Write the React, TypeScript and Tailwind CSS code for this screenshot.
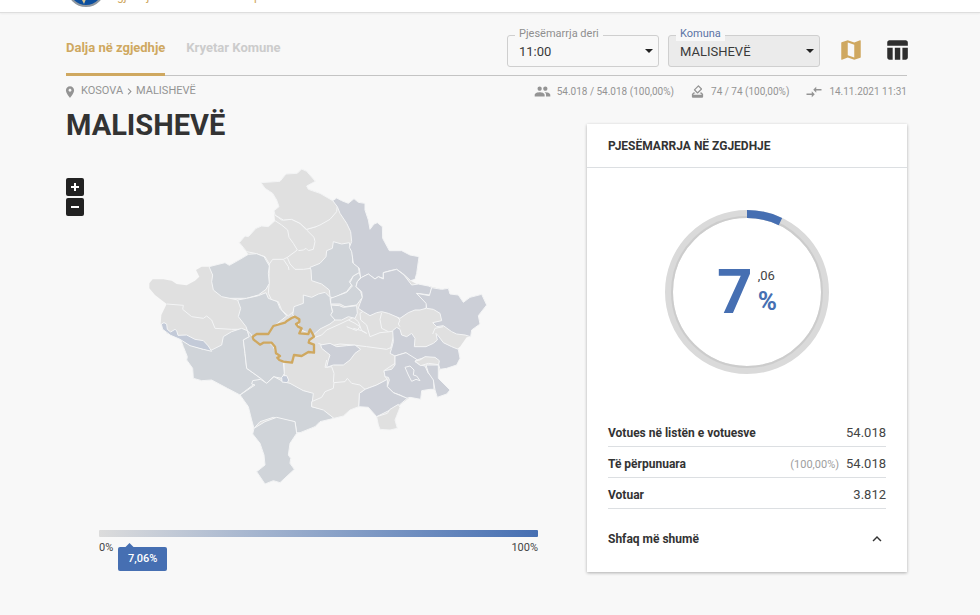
import type { ReactNode } from "react";

const LIGHT = "#e0e0e0";
const MID = "#d0d4d9";
const BLUE = "#cccfd7";
const LAKE = "#c3cad8";

type Region = { name: string; fill: string; points: string };

const outline =
  "363,68 420,64 438,42 472,40 485,27 500,34 526,64 500,78 505,88 540,100 578,122 590,114 605,122 625,130 642,116 655,127 675,130 675,150 685,180 690,208 702,192 712,188 727,200 728,235 748,272 785,272 810,285 837,290 830,340 812,362 835,375 865,378 905,388 925,385 930,402 955,405 970,427 990,412 1025,403 1040,435 1015,467 1020,492 995,510 992,530 980,532 960,560 950,568 960,595 950,615 920,625 898,628 895,655 930,690 920,702 892,712 885,690 870,688 845,692 842,718 810,712 780,735 778,745 765,780 772,805 750,810 720,808 710,770 685,742 655,740 630,750 610,768 582,775 540,785 525,800 480,818 470,820 450,850 445,885 452,895 450,910 463,928 420,968 400,962 375,972 350,935 375,915 372,885 360,850 338,822 342,805 325,740 300,705 262,685 215,660 185,662 160,655 158,625 140,600 142,590 130,560 120,535 80,520 62,492 64,465 80,432 45,405 28,385 28,370 38,358 70,358 95,362 110,372 140,376 165,362 178,350 168,330 185,320 207,320 255,308 268,316 300,298 325,283 298,248 315,228 325,230 348,205 365,198 385,200 405,182 402,152 417,140 410,120 398,100 375,85";

const northWest: Region[] = [
  { name: "Leposaviq", fill: LIGHT, points: "363,68 420,64 438,42 472,40 485,27 500,34 526,64 500,78 505,88 540,100 578,122 592,135 590,155 570,178 540,195 528,200 500,208 480,190 455,178 430,180 405,165 402,152 417,140 410,120 398,100 375,85" },
  { name: "Zubin Potok", fill: LIGHT, points: "405,182 425,195 443,210 447,232 460,250 472,270 442,292 430,298 398,298 388,312 375,290 345,280 320,275 298,248 315,228 325,230 348,205 365,198 385,200" },
  { name: "Istog", fill: MID, points: "207,320 255,308 268,316 300,298 325,283 350,281 372,290 388,318 385,340 388,370 378,388 355,405 320,415 270,415 245,410 220,390 215,365 218,345" },
  { name: "Klina", fill: MID, points: "293,420 320,415 355,407 378,398 385,415 412,425 420,445 440,468 400,500 385,520 340,532 325,520 318,500 295,470 302,445" },
];

const northEast: Region[] = [
  { name: "Vushtrri", fill: MID, points: "100,245 125,252 148,248 150,262 157,275 158,308 175,320 178,338 160,348 148,365 155,375 140,395 118,405 100,415 90,410 88,390 65,372 35,362 33,330 30,322 60,310 78,290 80,272 97,265" },
  { name: "Obiliq", fill: MID, points: "178,338 160,348 150,368 157,378 140,397 92,415 92,432 120,432 135,440 170,435 187,412 182,395 168,380 172,365 182,352" },
  { name: "Fushe Kosova", fill: MID, points: "92,435 118,437 130,442 170,437 172,460 165,475 145,470 125,480 105,480 90,465 98,455" },
  { name: "Podujeva", fill: BLUE, points: "98,122 110,114 125,122 145,130 162,116 175,127 195,130 195,150 205,180 210,208 222,192 232,188 247,200 248,235 268,272 305,272 330,285 357,290 350,340 345,358 332,362 310,342 290,328 270,332 250,338 250,355 235,350 225,357 205,342 182,354 178,325 160,310 155,275 148,262 155,245 152,215 140,190 120,160 112,140" },
  { name: "Prishtina", fill: BLUE, points: "185,352 205,342 225,357 235,350 250,357 250,338 290,328 312,345 335,375 355,372 385,378 395,382 390,405 350,400 380,430 378,445 360,450 345,450 325,458 300,475 265,460 245,455 230,458 210,467 190,455 175,445 180,430 187,412 185,395 168,380 172,365" },
  { name: "Kamenica", fill: BLUE, points: "350,400 388,407 395,383 425,388 445,385 450,402 475,405 490,427 510,412 545,403 560,435 535,467 540,492 515,510 512,530 495,525 470,522 455,515 430,497 410,500 398,488 425,482 420,460 400,448 380,445 378,430" },
  { name: "Drenas", fill: MID, points: "-18,440 10,430 10,405 35,412 55,402 75,397 90,412 92,430 97,455 92,465 105,480 90,492 60,507 40,525 15,515 -5,505 -5,478 -22,465" },
];

const southWest: Region[] = [
  { name: "Gjakova", fill: MID, points: "122,88 150,105 190,118 215,120 245,105 250,80 275,65 305,55 322,62 328,80 310,90 315,130 320,175 362,205 335,228 300,255 262,235 215,210 185,212 160,205 158,175 140,150 142,140 130,110" },
  { name: "Rahovec", fill: MID, points: "322,62 335,75 340,90 385,95 400,110 415,145 430,158 433,190 425,205 400,200 380,220 362,205 320,175 315,130 310,90 328,80" },
  { name: "Prizren", fill: MID, points: "300,255 345,225 335,222 338,212 362,208 380,220 402,200 430,215 450,220 490,242 520,250 515,290 550,298 582,325 540,335 525,350 480,368 470,368 465,335 430,330 400,322 360,335 342,355 335,330 325,290" },
  { name: "Dragash", fill: MID, points: "342,355 375,335 410,322 465,335 470,370 450,400 445,435 452,445 450,460 463,478 420,518 400,512 375,522 350,485 375,465 372,435 360,400 338,372" },
  { name: "Junik", fill: LAKE, points: "64,42 72,38 80,42 82,58 92,66 105,58 110,62 114,76 140,75 165,88 190,92 205,108 215,124 190,118 150,107 120,88 92,76 68,58" },
  { name: "Mamusha", fill: LAKE, points: "425,202 430,197 440,197 446,210 442,218 426,216" },
];

const southEast: Region[] = [
  { name: "Shtime", fill: BLUE, points: "62,105 90,100 110,110 140,107 165,105 182,118 165,130 150,150 130,165 100,165 80,172 85,150 90,135 65,115" },
  { name: "Gjilan", fill: BLUE, points: "278,62 290,52 300,58 305,75 320,80 335,70 345,85 343,110 378,110 400,100 412,90 408,70 415,78 430,98 455,110 475,118 480,145 470,165 440,175 420,178 415,160 400,145 375,142 350,150 325,135 318,128 285,138 270,130 275,115 280,95" },
  { name: "Viti", fill: BLUE, points: "285,138 318,128 350,148 345,155 360,165 375,168 385,190 400,200 402,238 390,238 365,242 362,268 330,262 320,265 300,255 280,248 262,230 268,210 265,202 255,200 252,182 275,178 285,165" },
  { name: "Partesh", fill: BLUE, points: "378,165 415,165 415,205 450,240 440,252 412,262 405,240 400,210 385,188" },
  { name: "Ranillug", fill: LIGHT, points: "345,153 360,150 375,140 405,142 418,152 416,164 385,160 362,167" },
  { name: "Kllokot", fill: BLUE, points: "315,172 330,168 342,180 340,195 350,198 360,212 348,208 335,214 325,195" },
  { name: "Kacanik", fill: BLUE, points: "178,250 195,238 230,225 262,208 262,230 280,248 322,265 298,285 270,300 240,315 230,320 205,292 176,290" },
  { name: "Hani i Elezit", fill: LIGHT, points: "230,320 262,310 270,298 295,283 300,292 285,330 292,355 270,360 240,358 235,345" },
  { name: "Shterpca", fill: LIGHT, points: "35,275 65,262 75,245 100,235 102,218 135,215 142,205 155,220 180,225 195,238 178,250 176,290 150,300 130,318 102,325 70,300 35,290" },
];

const municipalBorders = [
  "80,432 130,436 128,448 155,470 190,475 200,468 215,480 225,505 275,508 310,508 320,525",
  "293,420 270,415",
  "405,165 425,180 430,180 455,178 480,190 500,210 522,232 525,245 520,268 505,272 498,265 490,270 475,272",
  "442,292 450,312 465,328 490,328 512,325",
  "430,298 445,320 447,330",
  "388,312 387,350 387,375 385,400 395,420 415,425 425,450 445,468 460,455 465,440",
  "500,208 528,200 532,190",
  "560,510 600,492 625,480 645,490 660,500 650,512 620,500",
  "625,480 640,472 655,485 665,512 680,520 665,512 640,505",
  "675,450 660,460 662,480 680,495 690,530 720,518 750,515 765,512",
  "725,458 720,478 725,505 745,515",
  "745,455 765,465 780,480 775,492 780,500",
  "535,550 560,560 600,552 640,555 680,560 740,568 760,560",
  "765,512 758,540 752,565 765,580 765,610 732,632 735,650 742,658 710,675 675,688",
  "580,668 582,640 575,620 555,622 560,600",
  "525,532 545,525 560,510",
  "515,700 500,695 480,690",
  "432,608 433,650",
  "878,522 885,505 910,500",
];

function Regions({ items, x, y }: { items: Region[]; x: number; y: number }) {
  return (
    <g transform={`translate(${x} ${y})`} stroke="#f4f5f6" strokeWidth="3" strokeLinejoin="round">
      {items.map((r) => (
        <polygon key={r.name} points={r.points} fill={r.fill} />
      ))}
    </g>
  );
}

function KosovoMap() {
  return (
    <svg viewBox="0 0 1050 990" className="ml-[74px] block w-[350px]" aria-hidden="true">
      <polygon points={outline} fill={LIGHT} />
      <g fill="none" stroke="#f4f5f6" strokeWidth="3" strokeLinejoin="round">
        {municipalBorders.map((p) => (
          <polyline key={p} points={p} />
        ))}
      </g>
      <Regions items={northWest} x={0} y={0} />
      <Regions items={northEast} x={480} y={0} />
      <Regions items={southWest} x={0} y={450} />
      <Regions items={southEast} x={480} y={450} />
      <polygon
        transform="translate(0 450)"
        points="338,80 350,72 385,72 400,48 435,38 442,32 455,24 465,20 478,28 478,36 468,42 474,50 485,55 478,70 505,72 510,58 518,72 522,80 508,90 506,98 522,104 522,128 505,126 485,138 462,135 456,158 430,155 418,150 412,143 420,138 408,130 405,110 395,98 370,98 360,104 340,88"
        fill={MID}
        stroke="#cfa860"
        strokeWidth="7"
        strokeLinejoin="round"
      />
    </svg>
  );
}

function Icon({ path, className }: { path: string; className: string }) {
  return (
    <svg viewBox="0 0 24 24" fill="currentColor" className={className} aria-hidden="true">
      <path d={path} />
    </svg>
  );
}

const icons = {
  pin: "M12 2C8.13 2 5 5.13 5 9c0 5.25 7 13 7 13s7-7.75 7-13c0-3.87-3.13-7-7-7zm0 9.500c-1.380 0-2.500-1.120-2.500-2.500s1.120-2.500 2.500-2.500 2.500 1.120 2.500 2.500-1.120 2.500-2.500 2.500z",
  chevronRight: "M8.590 16.590L13.170 12 8.590 7.410 10 6l6 6-6 6z",
  chevronUp: "M12 8l-6 6 1.410 1.410L12 10.830l4.590 4.580L18 14z",
  group:
    "M16 11c1.660 0 2.990-1.340 2.990-3S17.660 5 16 5s-3 1.340-3 3 1.340 3 3 3zm-8 0c1.660 0 2.990-1.340 2.990-3S9.660 5 8 5 5 6.340 5 8s1.340 3 3 3zm0 2c-2.330 0-7 1.170-7 3.500V19h14v-2.500c0-2.330-4.670-3.500-7-3.500zm8 0c-.290 0-.620.020-.970.050 1.160.840 1.970 1.970 1.970 3.450V19h6v-2.500c0-2.330-4.670-3.500-7-3.500z",
  ballot:
    "M18 13h-.68l-2 2h1.910L19 17H5l1.780-2h2.050l-2-2H6l-3 3v4c0 1.100.890 2 1.990 2H19c1.100 0 2-.890 2-2v-4l-3-3zm-1-5.050l-4.950 4.950-3.540-3.540 4.950-4.950L17 7.950zm-4.240-5.660L6.390 8.660c-.390.390-.390 1.020 0 1.410l4.950 4.950c.390.390 1.020.390 1.410 0l6.360-6.360c.390-.390.390-1.020 0-1.410L14.160 2.300c-.380-.400-1.010-.400-1.400-.010z",
  sync: "M9.010 14H2v2h7.010v3L13 15l-3.990-4v3zm5.980-1v-3H22V8h-7.010V5L11 9l3.990 4z",
  map: "M20.500 3l-.16.030L15 5.100 9 3 3.360 4.900c-.210.070-.360.250-.360.480V20.500c0 .280.220.500.500.500l.160-.030L9 18.900l6 2.100 5.640-1.900c.210-.070.360-.250.360-.480V3.500c0-.280-.220-.500-.500-.500zM15 19l-6-2.110V5l6 2.110V19z",
  table: "M10 10.020h5V21h-5zM17 21h3c1.100 0 2-.900 2-2v-9h-5v11zm3-18H5c-1.100 0-2 .900-2 2v3h19V5c0-1.100-.900-2-2-2zM3 19c0 1.100.900 2 2 2h3V10H3v9z",
};

function SelectField({ id, label, value, active }: { id: string; label: string; value: string; active?: boolean }) {
  return (
    <div className="relative w-[152px]">
      <label
        htmlFor={id}
        className={
          "absolute left-[8px] -top-[8px] bg-[#f8f8f8] px-[4px] text-[11px] leading-[14px] " +
          (active ? "text-[#5b74a5]" : "text-[#8f8f8f]")
        }
      >
        {label}
      </label>
      <select
        id={id}
        className={
          "h-[32px] w-full appearance-none rounded-[3px] border border-[#cfcfcf] pl-[11px] pr-6 pt-[2px] text-[13px] text-[#3a3a3a] outline-none " +
          (active ? "bg-[#ebebeb]" : "bg-transparent")
        }
      >
        <option>{value}</option>
      </select>
      <svg viewBox="0 0 10 5" className="pointer-events-none absolute right-[5px] top-[14px] h-[5px] w-[10px]" aria-hidden="true">
        <path d="M1 0h8L5 4z" fill="#222" />
      </svg>
    </div>
  );
}

function Stat({ path, iconClass, children }: { path: string; iconClass: string; children: ReactNode }) {
  return (
    <span className="flex items-center gap-[6px]">
      <Icon path={path} className={iconClass} />
      {children}
    </span>
  );
}

function Row({ label, note, value }: { label: string; note?: string; value: string }) {
  return (
    <tr className="h-[31px] border-b border-[#dcdfe2]">
      <th scope="row" className="pt-[5px] text-left text-[12px] font-bold text-[#333]">{label}</th>
      <td className="pt-[5px] text-right text-[13px] text-[#444]">
        {note && <span className="mr-[7px] text-[11px] text-[#9e9e9e]">{note}</span>}
        {value}
      </td>
    </tr>
  );
}

export default function App() {
  return (
    <div className="min-h-screen bg-[#f8f8f8] font-[Roboto,'Liberation_Sans',sans-serif] text-[#333]">
      <header className="flex h-[13px] items-end overflow-hidden border-b border-[#dedede] bg-white pl-[66px] shadow-[0_1px_2px_rgba(0,0,0,0.05)]">
        <svg viewBox="0 0 40 40" className="mb-[4px] h-[40px] w-[40px] shrink-0" aria-hidden="true">
          <circle cx="20" cy="20" r="18" fill="#0d4f9e" stroke="#8f979f" strokeWidth="2" />
          <path d="M16 24l5 1-1 6-2 5-2-4z" fill="#d8c795" />
        </svg>
        <p className="mb-[9px] ml-[4px] text-[12px] leading-[14px] text-[#cfa860]">Zgjedhjet Lokale në tërë Republikën</p>
      </header>

      <main className="pl-[66px] pr-[73px]">
        <div className="flex h-[63px] justify-between border-b border-[#c4c4c4]">
          <nav className="-mb-px flex gap-[21px] text-[13px] font-bold">
            <a href="#dalja" className="border-b-[3px] border-[#cfa860] pt-[25px] leading-[20px] text-[#cfa860]">Dalja në zgjedhje</a>
            <a href="#kryetar" className="pt-[25px] leading-[20px] text-[#cccccc]">Kryetar Komune</a>
          </nav>
          <div className="flex items-start pt-[22px]">
            <SelectField id="deri" label="Pjesëmarrja deri" value="11:00" />
            <div className="w-[9px]" />
            <SelectField id="komuna" label="Komuna" value="MALISHEVË" active />
            <button aria-label="Harta" className="ml-[18px] mt-[2px] text-[#cfa860]">
              <Icon path={icons.map} className="h-[26px] w-[26px]" />
            </button>
            <button aria-label="Tabela" className="-mr-[3px] ml-[20px] mt-[2px] text-[#2e2e2e]">
              <Icon path={icons.table} className="h-[26px] w-[26px]" />
            </button>
          </div>
        </div>

        <div className="flex h-[31px] items-center justify-between text-[11px] text-[#949494]">
          <div className="-ml-[3px] flex items-center">
            <Icon path={icons.pin} className="h-[14px] w-[14px]" />
            <a href="#kosova" className="ml-[4px]">KOSOVA</a>
            <Icon path={icons.chevronRight} className="h-[13px] w-[13px]" />
            <span>MALISHEVË</span>
          </div>
          <div className="flex items-center gap-[16px] text-[10px]">
            <Stat path={icons.group} iconClass="h-[17px] w-[17px]">54.018 / 54.018 (100,00%)</Stat>
            <Stat path={icons.ballot} iconClass="h-[15px] w-[15px]">74 / 74 (100,00%)</Stat>
            <Stat path={icons.sync} iconClass="h-[18px] w-[18px]">14.11.2021 11:31</Stat>
          </div>
        </div>

        <div className="flex items-start gap-[49px]">
          <section className="min-w-0 flex-1">
            <h1 className="text-[29px] font-bold leading-[36px] text-[#333]">MALISHEVË</h1>
            <div className="mt-[17px] flex items-start">
              <div className="mt-[18px] flex w-0 flex-col gap-[2px]">
                <button aria-label="Zmadho" className="flex h-[18px] w-[18px] items-center justify-center rounded-[2px] bg-[#222] text-white">
                  <svg viewBox="0 0 10 10" className="h-[10px] w-[10px]"><path d="M1 5h8M5 1v8" stroke="currentColor" strokeWidth="2" /></svg>
                </button>
                <button aria-label="Zvogëlo" className="flex h-[18px] w-[18px] items-center justify-center rounded-[2px] bg-[#222] text-white">
                  <svg viewBox="0 0 10 10" className="h-[10px] w-[10px]"><path d="M1 5h8" stroke="currentColor" strokeWidth="2" /></svg>
                </button>
              </div>
              <KosovoMap />
            </div>
            <div className="ml-[33px] mt-[40px]">
              <div className="h-[7px] rounded-[1px] bg-linear-to-r from-[#dcdcdc] to-[#466fb2]" />
              <div className="flex items-start text-[11px] leading-[14px] text-[#444]">
                <span className="mt-[4px] w-[19px]">0%</span>
                <div className="mt-[6px] flex flex-col">
                  <svg viewBox="0 0 10 5" className="ml-[7px] h-[4px] w-[9px]" aria-hidden="true"><path d="M0 5l5-5 5 5z" fill="#466fb2" /></svg>
                  <span className="rounded-[2px] bg-[#466fb2] px-[10px] py-[5px] font-medium text-white">7,06%</span>
                </div>
                <span className="ml-auto mt-[4px]">100%</span>
              </div>
            </div>
          </section>

          <aside className="mt-[17px] w-[320px] shrink-0 bg-white shadow-[0_1px_3px_rgba(0,0,0,0.3)]">
            <h2 className="border-b border-[#dcdfe2] px-[21px] pb-[11px] pt-[12px] text-[12px] font-bold leading-[20px]">PJESËMARRJA NË ZGJEDHJE</h2>
            <div className="px-[21px] pt-[40px]">
              <div className="grid place-items-center">
                <svg viewBox="0 0 168 168" className="col-start-1 row-start-1 h-[168px] w-[168px]" aria-hidden="true">
                  <circle cx="84" cy="84" r="78" fill="none" stroke="#dadada" strokeWidth="8" />
                  <circle cx="84" cy="84" r="75" fill="none" stroke="#c6c6c6" strokeWidth="2" opacity="0.7" />
                  <circle cx="84" cy="84" r="78" fill="none" stroke="#466fb2" strokeWidth="8" pathLength="100" strokeDasharray="7.060 92.940" transform="rotate(-90 84 84)" />
                </svg>
                <div className="col-start-1 row-start-1 flex items-center gap-[5px]">
                  <span className="text-[62px] font-bold leading-[62px] text-[#466fb2]">7</span>
                  <div className="flex flex-col pb-[2px]">
                    <span className="text-[13px] leading-[20px] text-[#444]">,06</span>
                    <span className="text-[26px] font-bold leading-[30px] text-[#466fb2]">%</span>
                  </div>
                </div>
              </div>
              <table className="mt-[39px] w-full border-collapse">
                <tbody>
                  <Row label="Votues në listën e votuesve" value="54.018" />
                  <Row label="Të përpunuara" note="(100,00%)" value="54.018" />
                  <Row label="Votuar" value="3.812" />
                </tbody>
              </table>
              <button className="flex w-full items-center justify-between pb-[23px] pt-[20px] text-[12px] font-bold leading-[20px] text-[#333]">
                Shfaq më shumë
                <Icon path={icons.chevronUp} className="h-[18px] w-[18px]" />
              </button>
            </div>
          </aside>
        </div>
      </main>
    </div>
  );
}
